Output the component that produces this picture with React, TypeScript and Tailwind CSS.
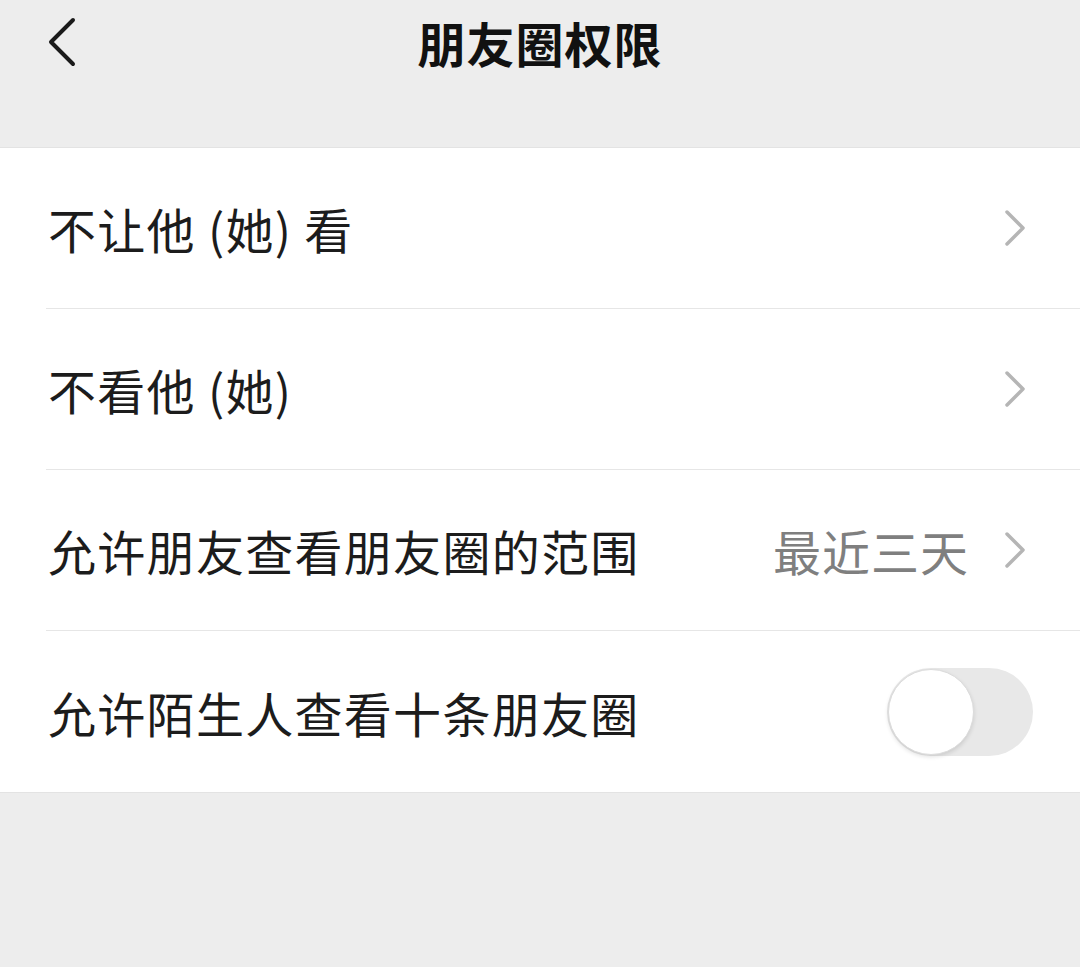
import type { ReactNode } from "react";

const font = { fontFamily: '"Noto Sans CJK SC", "Noto Sans", sans-serif' };

const Chevron = () => (
  <svg width="24" height="38" viewBox="0 0 24 38" fill="none" className="shrink-0">
    <path d="M4 3 L20 19 L4 35" stroke="#b5b5b5" strokeWidth="3.5" strokeLinecap="round" strokeLinejoin="round" />
  </svg>
);

const Toggle = () => (
  <div className="relative w-[146px] h-[88px] rounded-full bg-[#e8e8e8]">
    <div className="absolute left-[1px] top-[1px] w-[86px] h-[86px] rounded-full bg-white border border-[#dcdcdc] shadow-[0_2px_4px_rgba(0,0,0,0.12)]" />
  </div>
);

const Row = ({ label, right, divider = true }: { label: string; right: ReactNode; divider?: boolean }) => (
  <div className="pl-[46px]">
    <div className={`flex items-center justify-between h-[161px] pr-[47px] ${divider ? "border-b border-[#e6e6e6]" : ""}`}>
      <span className="pl-[2px] text-[48px] text-[#1c1c1c] leading-none tracking-[1.3px]">{label}</span>
      {right}
    </div>
  </div>
);

export default function App() {
  return (
    <div className="w-[1080px] h-[967px] bg-[#ededed]" style={font}>
      <div className="h-[148px] border-b border-[#e3e3e3]">
        <div className="relative flex items-center justify-center h-[84px]">
          <svg width="32" height="50" viewBox="0 0 32 50" fill="none" className="absolute left-[46px] top-[17px]">
            <path d="M27 3 L5 25 L27 47" stroke="#1a1a1a" strokeWidth="4" strokeLinecap="round" strokeLinejoin="round" />
          </svg>
          <h1 className="text-[48px] font-bold text-[#111] leading-none tracking-[1px]">朋友圈权限</h1>
        </div>
      </div>
      <div className="bg-white">
        <Row label="不让他 (她) 看" right={<span className="pr-[6px]"><Chevron /></span>} />
        <Row label="不看他 (她)" right={<span className="pr-[6px]"><Chevron /></span>} />
        <Row
          label="允许朋友查看朋友圈的范围"
          right={
            <div className="flex items-center gap-[34px] pr-[6px]">
              <span className="text-[48px] text-[#7f7f7f] leading-none tracking-[1px]">最近三天</span>
              <Chevron />
            </div>
          }
        />
        <Row label="允许陌生人查看十条朋友圈" right={<Toggle />} divider={false} />
      </div>
      <div className="border-t border-[#e3e3e3]" />
    </div>
  );
}
